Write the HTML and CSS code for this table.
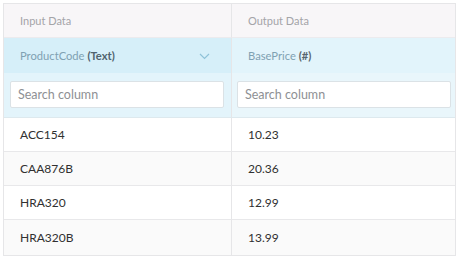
FILE: index.html
```html
<!DOCTYPE html>
<html>
<head>
<meta charset="utf-8">
<link rel="stylesheet" href="styles.css">
</head>
<body>
<div class="table">
  <div class="cell head">Input Data</div>
  <div class="cell head">Output Data</div>
  <div class="cell field field-in">
    <span>ProductCode <b>(Text)</b></span>
    <svg class="chev" width="11" height="7" viewBox="0 0 11 7"><path d="M1 1 L5.5 5.5 L10 1" fill="none" stroke="#8fc2d8" stroke-width="1.2"/></svg>
  </div>
  <div class="cell field field-out"><span>BasePrice <b>(#)</b></span></div>
  <div class="cell search search-in"><div class="box">Search column</div></div>
  <div class="cell search search-out"><div class="box">Search column</div></div>
  <div class="cell row">ACC154</div>
  <div class="cell row">10.23</div>
  <div class="cell row alt">CAA876B</div>
  <div class="cell row alt">20.36</div>
  <div class="cell row">HRA320</div>
  <div class="cell row">12.99</div>
  <div class="cell row alt">HRA320B</div>
  <div class="cell row alt">13.99</div>
</div>
</body>
</html>
```

FILE: styles.css
```css
html, body { margin: 0; padding: 0; background: #fff; }
body {
  padding: 3px 6px 3px 3px;
  font-family: Lato, "Open Sans", sans-serif;
}
.table {
  display: grid;
  grid-template-columns: 228px 1fr;
  grid-template-rows: 34px 35px 45px 34px 34px 34px 35px;
  border: 1px solid #e6e6e8;
  box-sizing: border-box;
  width: 453px;
}
.cell {
  display: flex;
  align-items: center;
  padding-left: 16px;
  border-bottom: 1px solid #e8e8ea;
  font-size: 12px;
  color: #303030;
}
.cell:nth-child(odd) { border-right: 1px solid #e6e6e8; }
.cell:nth-last-child(-n+2) { border-bottom: none; }
.head {
  background: #f8f6f8;
  color: #a4a4a8;
  font-size: 11px;
  border-bottom-color: #ecebee;
}
.field {
  font-size: 11.2px;
  color: #7fa1b2;
  justify-content: space-between;
  padding-right: 21px;
  border-bottom: none;
}
.field b { color: #50636e; font-weight: 700; }
.field-in { background: #d6eff9; }
.field-out { background: #e2f4fb; }
.field-out b { color: #58666e; }
.chev { margin-top: 1px; }
.search {
  padding: 0 7px 0 6px;
  border-bottom-color: #dde9ee;
}
.search-out { padding: 0 4px 0 5px; }
.search-in { background: #e3f4fb; }
.search-out { background: #e9f6fb; }
.box {
  flex: 1;
  height: 27px;
  margin-top: -1px;
  background: #fff;
  border: 1px solid #dbe2e6;
  border-radius: 2px;
  box-sizing: border-box;
  display: flex;
  align-items: center;
  padding-left: 7px;
  font-size: 12.5px;
  color: #8e9094;
}
.row { background: #fff; }
.row.alt { background: #fafafa; }
```
